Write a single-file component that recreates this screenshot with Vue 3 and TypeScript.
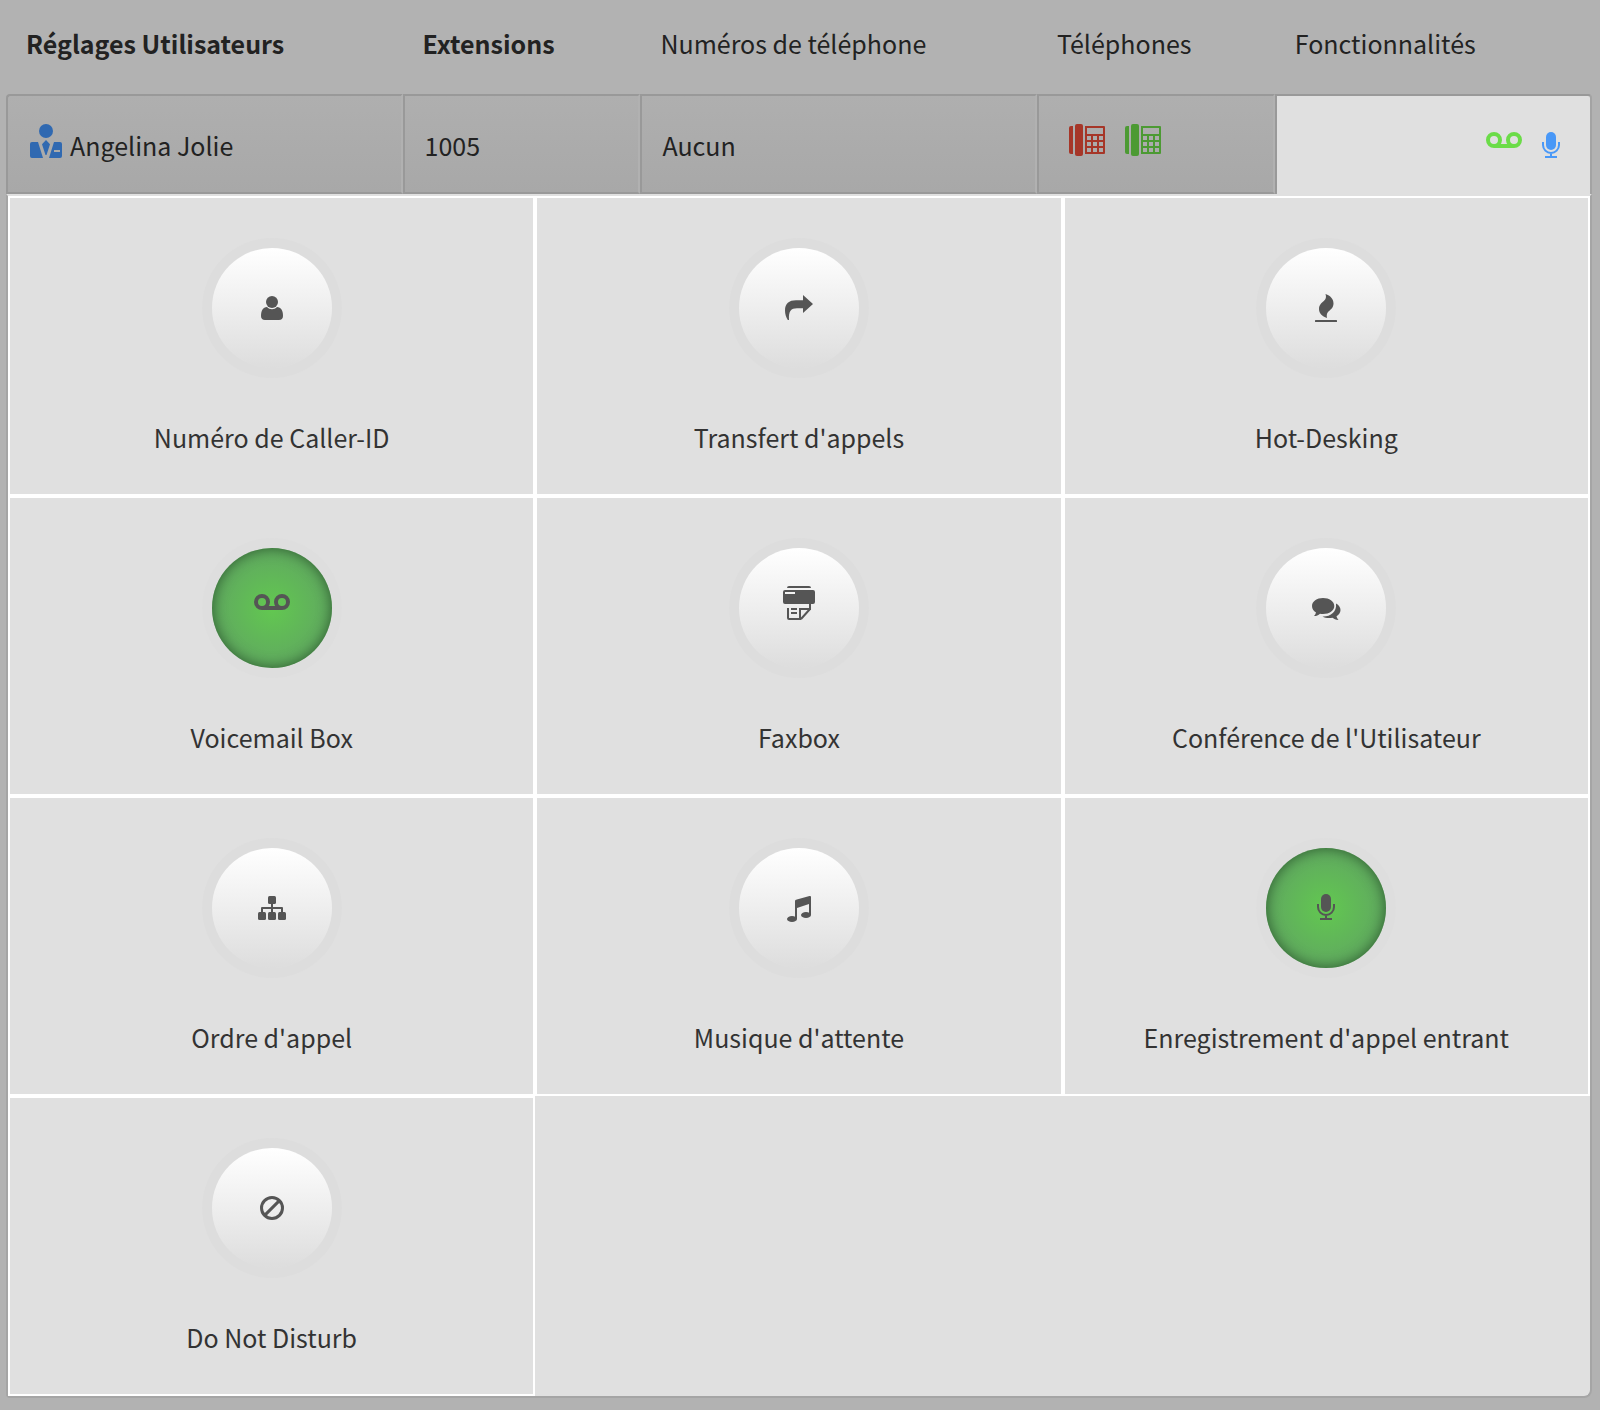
<script setup lang="ts">
type IconName =
  | 'user' | 'share' | 'fire' | 'voicemail' | 'fax'
  | 'comments' | 'sitemap' | 'music' | 'microphone' | 'ban'

interface Feature {
  id: IconName
  label: string
  active?: boolean
}

const features: Feature[] = [
  { id: 'user', label: 'Numéro de Caller-ID' },
  { id: 'share', label: "Transfert d'appels" },
  { id: 'fire', label: 'Hot-Desking' },
  { id: 'voicemail', label: 'Voicemail Box', active: true },
  { id: 'fax', label: 'Faxbox' },
  { id: 'comments', label: "Conférence de l'Utilisateur" },
  { id: 'sitemap', label: "Ordre d'appel" },
  { id: 'music', label: "Musique d'attente" },
  { id: 'microphone', label: "Enregistrement d'appel entrant", active: true },
  { id: 'ban', label: 'Do Not Disturb' },
]

const phones = ['offline', 'online']
</script>

<template>
  <main class="page">
    <table class="users">
      <colgroup>
        <col class="wide" />
        <col class="narrow" />
        <col class="wide" />
        <col class="narrow" />
        <col class="rest" />
      </colgroup>
      <thead>
        <tr>
          <th scope="col" class="strong">Réglages Utilisateurs</th>
          <th scope="col" class="strong">Extensions</th>
          <th scope="col">Numéros de téléphone</th>
          <th scope="col">Téléphones</th>
          <th scope="col">Fonctionnalités</th>
        </tr>
      </thead>
      <tbody>
        <tr class="user">
          <td>
            <div class="content name">
              <svg class="avatar" viewBox="0 0 32 34" aria-hidden="true">
                <circle cx="16" cy="7" r="7" />
                <path d="M2 18h6l5 16H2q-2 0-2-2V20q0-2 2-2zM16 16l4 4.300L16.500 31h-1L12 20.300z" />
                <path fill-rule="evenodd" d="M24 18h6q2 0 2 2v12q0 2-2 2H19zM24 26v2h6v-2z" />
              </svg>
              <span>Angelina Jolie</span>
            </div>
          </td>
          <td><div class="content">1005</div></td>
          <td><div class="content">Aucun</div></td>
          <td>
            <div class="content phones">
              <svg v-for="state in phones" :key="state" :class="['phone', state]" viewBox="0 0 36 32" aria-hidden="true">
                <path d="M2 2h2v28H2q-2 0-2-2V4q0-2 2-2z" />
                <rect x="6" width="8" height="32" rx="2" />
                <path
                  fill-rule="evenodd"
                  d="M16 2h19q1 0 1 1v26q0 1-1 1H16zM18 4v6h16V4zM18 12v4h4v-4zM24 12v4h4v-4zM30 12v4h4v-4zM18 18v4h4v-4zM24 18v4h4v-4zM30 18v4h4v-4zM18 24v4h4v-4zM24 24v4h4v-4zM30 24v4h4v-4z"
                />
              </svg>
            </div>
          </td>
          <td class="open">
            <div class="content enabled">
              <svg class="vm" viewBox="0 0 36 16" aria-hidden="true">
                <g fill="none" stroke="currentColor" stroke-width="4">
                  <circle cx="8" cy="8" r="6" />
                  <circle cx="28" cy="8" r="6" />
                  <path d="M8 14h20" />
                </g>
              </svg>
              <svg class="mic" viewBox="0 0 18 26" aria-hidden="true">
                <rect x="4" width="10" height="18" rx="5" />
                <path fill="none" stroke="currentColor" stroke-width="2" d="M1 10v3a8 8 0 0 0 16 0v-3M9 21v4M3 25h12" />
              </svg>
            </div>
          </td>
        </tr>
        <tr>
          <td colspan="5" class="panel">
            <div class="grid">
              <button v-for="f in features" :key="f.id" type="button" class="feature">
                <span :class="['disc', { active: f.active }]">
                  <svg viewBox="-2 -2 44 44" aria-hidden="true">
                    <g v-if="f.id === 'user'">
                      <circle cx="20" cy="14" r="6" />
                      <path d="M15 19c1.500 1.500 3 2.200 5 2.200s3.500-.7 5-2.200c4 0 6 3.500 6 9 0 2.500-1.500 4-4 4H13c-2.500 0-4-1.500-4-4 0-5.500 2-9 6-9z" />
                    </g>
                    <path
                      v-else-if="f.id === 'share'"
                      d="M24 7l10 9-10 9v-4.700h-6c-6 0-8.500 2.500-8 11.700H8.800C7 29 6 26 6 22.500 6 15.500 10 12.300 17 12.300h7z"
                    />
                    <g v-else-if="f.id === 'fire'">
                      <path d="M19.500 6C24.500 7.500 27.500 11 27.500 15.500c0 4.500-3.500 6.500-5.500 8.500-1.300 1.600-1.500 3.500-1 6C16 28.500 13 25 13 21c0-4 2.500-6 4.800-8 2.200-2 2.700-4 1.700-7z" />
                      <rect x="9" y="32" width="22" height="2" rx=".5" />
                    </g>
                    <g v-else-if="f.id === 'voicemail'" fill="none" stroke="currentColor" stroke-width="4">
                      <circle cx="10" cy="14" r="6" />
                      <circle cx="30" cy="14" r="6" />
                      <path d="M10 20h20" />
                    </g>
                    <g v-else-if="f.id === 'fax'">
                      <path d="M10-2h20q2 0 2 2H8q0-2 2-2z" />
                      <path fill-rule="evenodd" d="M6 2h28q2 0 2 2v10q0 2-2 2H6q-2 0-2-2V4q0-2 2-2zM6 4v2h10V4z" />
                      <path fill="none" stroke="currentColor" stroke-width="2" d="M9 20v10q0 1 1 1h11v-10h10v-5M31 21l-9 10M12 21h6M12 25h6" />
                    </g>
                    <path
                      v-else-if="f.id === 'comments'"
                      d="M17 10c6.300 0 11.300 3.500 11.300 8s-5 8-11.300 8c-1 0-2 0-3-.3C12.300 27.300 10.500 28 8 28c1-1 1.700-2.200 2-3.600C7.500 23 6 20.600 6 18c0-4.500 5-8 11-8zM30 15.500c3 1.500 4.500 4 4.500 6.500 0 2.600-1.500 4.800-4 6.300.3 1.500 1 2.500 2 3.700-3 0-4.500-1-6-2.200-4 .7-7.500.2-10-1.300 8 .3 14.500-4.500 13.500-13z"
                    />
                    <g v-else-if="f.id === 'sitemap'">
                      <rect x="16" y="8" width="8" height="8" rx="1.500" />
                      <rect x="6" y="24" width="8" height="8" rx="1.500" />
                      <rect x="16" y="24" width="8" height="8" rx="1.500" />
                      <rect x="26" y="24" width="8" height="8" rx="1.500" />
                      <path fill="none" stroke="currentColor" stroke-width="2" stroke-linejoin="round" d="M20 16v8M10 24v-4h20v4" />
                    </g>
                    <g v-else-if="f.id === 'music'">
                      <ellipse cx="13" cy="31" rx="5" ry="3" />
                      <ellipse cx="27" cy="27" rx="5" ry="3" />
                      <path d="M16 13q0-1 1-1.300L30.500 8q1.500-.4 1.500 1v18h-2V16l-12 4v11h-2z" />
                    </g>
                    <g v-else-if="f.id === 'microphone'">
                      <rect x="15" y="6" width="10" height="18" rx="5" />
                      <path fill="none" stroke="currentColor" stroke-width="2" d="M12 16v3a8 8 0 0 0 16 0v-3M20 27v4M14 31h12" />
                    </g>
                    <g v-else fill="none" stroke="currentColor" stroke-width="3">
                      <circle cx="20" cy="20" r="10.500" />
                      <path d="M12.600 27.400l14.800-14.800" />
                    </g>
                  </svg>
                </span>
                <span class="label">{{ f.label }}</span>
              </button>
            </div>
          </td>
        </tr>
      </tbody>
    </table>
  </main>
</template>

<style>
body {
  background: #b2b2b2;
}
</style>

<style scoped>
.page {
  padding: 0 8px 12px 6px;
  font-family: "Noto Sans CJK SC", "Noto Sans", sans-serif;
  font-size: 25px;
  line-height: 38px;
  color: #222;
}

.users {
  width: 100%;
  table-layout: fixed;
  border-collapse: separate;
  border-spacing: 0;
}

.wide { width: 25%; }
.narrow { width: 15%; }
.rest { width: 20%; }

th {
  height: 94px;
  box-sizing: border-box;
  padding: 0 0 8px 20px;
  font-weight: 700;
  text-align: left;
  white-space: nowrap;
}

th:not(.strong) { font-weight: 400; }

.user td {
  height: 100px;
  box-sizing: border-box;
  padding: 0;
  border: 2px solid #999;
  border-right-color: #b1b1b1;
  background: linear-gradient(#afafaf, #a8a8a8);
  vertical-align: top;
}

.user td:first-child { border-top-left-radius: 4px; }

.user td.open {
  border-right-color: #a3a3a3;
  border-bottom: 0;
  border-top-right-radius: 4px;
  background: #e0e0e0;
}

.content {
  display: flex;
  align-items: center;
  height: 96px;
  box-sizing: border-box;
  padding: 2px 20px 0;
}

svg {
  display: block;
  flex: none;
  fill: currentColor;
}

.name { gap: 8px; padding-left: 22px; }

.avatar {
  width: 32px;
  height: 34px;
  margin-bottom: 8px;
  color: #3069b1;
}

.phones { gap: 20px; padding: 0 30px 8px; }
.phone { width: 36px; height: 32px; }
.offline { color: #a63628; }
.online { color: #4c9a33; }

.enabled {
  justify-content: flex-end;
  align-items: flex-start;
  gap: 20px;
  padding: 36px 30px 0;
}

.vm { width: 36px; height: 16px; color: #6bdc48; }
.mic { width: 18px; height: 26px; color: #4998f7; }

.panel {
  padding: 0;
  border: 2px solid #a5a5a5;
  border-top-color: #e0e0e0;
  border-radius: 0 0 8px 4px;
  background: #e0e0e0;
}

.grid {
  display: grid;
  grid-template-columns: repeat(3, 1fr);
}

.feature {
  display: flex;
  flex-direction: column;
  align-items: center;
  height: 300px;
  padding: 50px 0 0;
  border: 2px solid #fff;
  background: transparent;
  color: #333;
  font: inherit;
  cursor: pointer;
}

.disc {
  display: flex;
  align-items: center;
  justify-content: center;
  width: 120px;
  height: 120px;
  border-radius: 50%;
  background: linear-gradient(#fff, #ddd);
  box-shadow: 0 0 0 10px #ddd;
  color: #555;
}

.disc.active {
  background: radial-gradient(circle closest-side, #62c850, #60a860);
  box-shadow: 0 0 0 10px #dedede, inset 0 0 14px #2c5c2c;
}

.disc svg { width: 44px; height: 44px; }

.label { margin-top: 50px; }
</style>
